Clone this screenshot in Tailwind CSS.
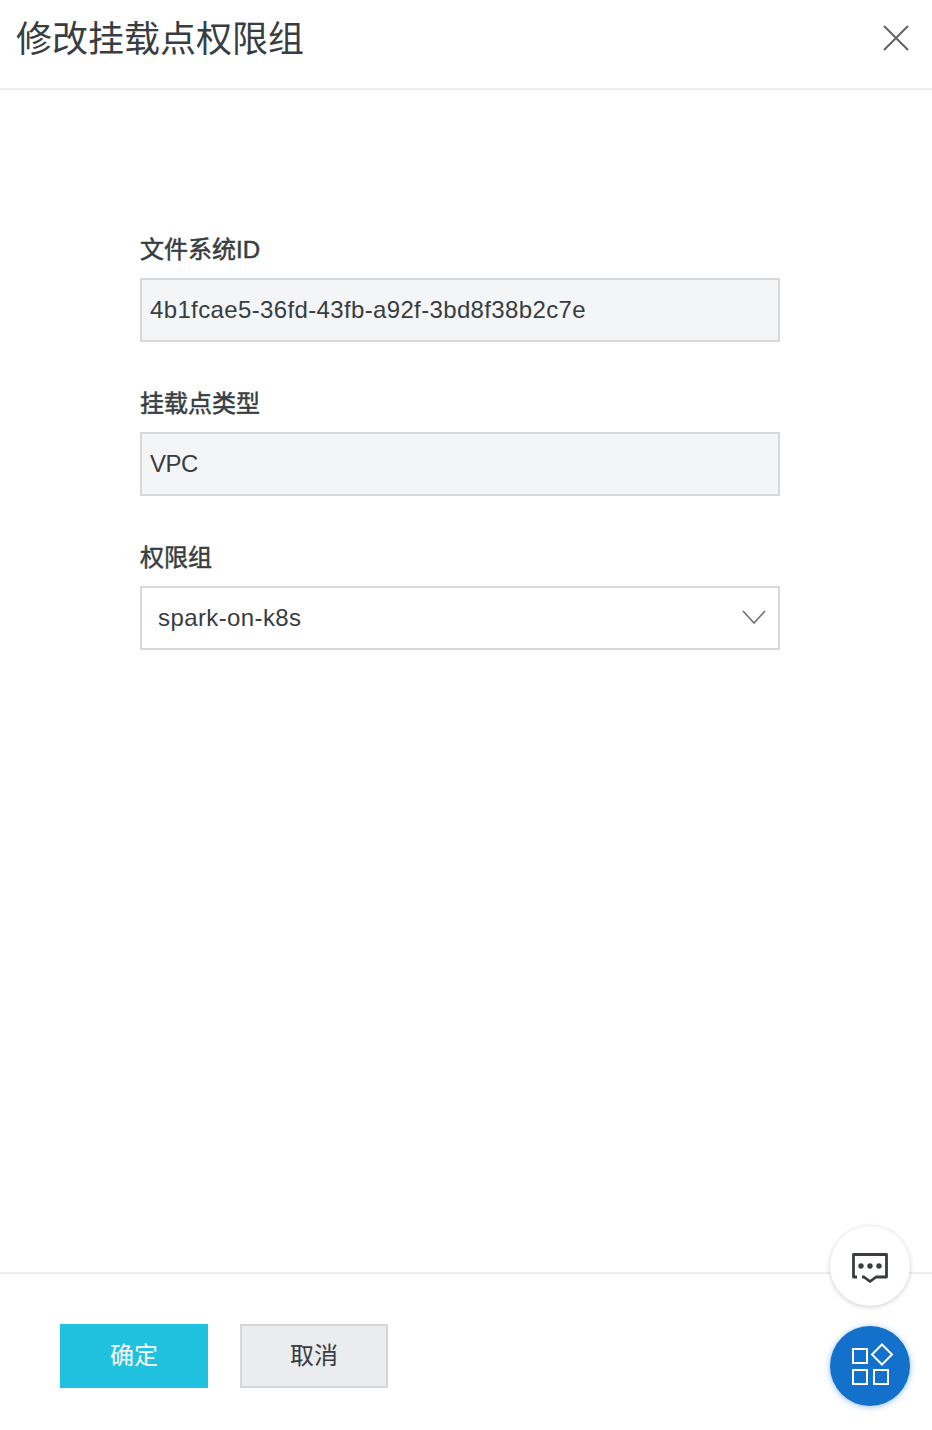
<!DOCTYPE html>
<html lang="zh-CN">
<head>
  <meta charset="UTF-8" />
  <meta name="viewport" content="width=device-width, initial-scale=1" />
  <title>修改挂载点权限组</title>
  <script src="https://cdn.jsdelivr.net/npm/@tailwindcss/browser@4"></script>
</head>
<body class="bg-white">
  <div class="relative flex flex-col w-[932px] h-[1430px] overflow-hidden text-[#373d41] font-['Liberation_Sans','Noto_Sans_CJK_SC',sans-serif]">
    <header class="flex items-center justify-between h-[90px] shrink-0 pl-4 pr-[22px] pb-3 border-b-2 border-[#eeeeee]">
      <h1 class="mt-1 text-[36px] leading-[44px] font-normal">修改挂载点权限组</h1>
      <svg class="w-7 h-7 text-[#5f6367]" viewBox="0 0 28 28" fill="none" stroke="currentColor" stroke-width="2">
        <path d="M2 2L26 26M26 2L2 26" />
      </svg>
    </header>

    <main class="flex-1 pl-[140px] pr-[152px] pt-[144px] flex flex-col gap-[46px]">
      <div>
        <label class="block h-[44px] text-2xl leading-8 [-webkit-text-stroke:0.5px_#373d41]">文件系统ID</label>
        <div class="flex items-center h-16 px-2 border-2 border-[#d7d8d9] bg-[#f4f5f7] text-2xl tracking-[0.36px]">4b1fcae5-36fd-43fb-a92f-3bd8f38b2c7e</div>
      </div>
      <div>
        <label class="block h-[44px] text-2xl leading-8 [-webkit-text-stroke:0.5px_#373d41]">挂载点类型</label>
        <div class="flex items-center h-16 px-2 border-2 border-[#d7d8d9] bg-[#f4f5f7] text-2xl tracking-[-0.5px]">VPC</div>
      </div>
      <div>
        <label class="block h-[44px] text-2xl leading-8 [-webkit-text-stroke:0.5px_#373d41]">权限组</label>
        <div class="flex items-center justify-between h-16 pl-4 pr-3 border-2 border-[#d7d8d9] bg-white text-2xl tracking-[0.4px]">
          <span>spark-on-k8s</span>
          <svg class="w-6 h-3.5 -mt-0.5 text-[#6b6f73]" viewBox="0 0 24 14" fill="none" stroke="currentColor" stroke-width="1.6">
            <path d="M1 1L12 13L23 1" />
          </svg>
        </div>
      </div>
    </main>

    <footer class="h-[158px] shrink-0 border-t-2 border-[#eeeeee] pt-[50px] pl-[60px] flex gap-8">
      <button class="w-[148px] h-16 bg-[#1fc1df] text-white text-2xl">确定</button>
      <button class="w-[148px] h-16 bg-[#eaeced] border-2 border-[#d4d6d7] text-2xl">取消</button>
    </footer>

    <!-- floating widgets -->
    <div class="absolute right-[22px] bottom-6 flex flex-col gap-5">
      <div class="w-20 h-20 rounded-full bg-white shadow-[0_1px_5px_rgba(0,0,0,0.2)]">
        <svg class="w-20 h-20 text-[#373d41]" viewBox="0 0 80 80" fill="none" stroke="currentColor" stroke-width="2.8">
          <path d="M27 51H23.5V28.5H56.5V51H46L40 55.5L34 51H32" stroke-linejoin="round" />
          <circle cx="31" cy="40" r="2.7" fill="currentColor" stroke="none" />
          <circle cx="40" cy="40" r="2.7" fill="currentColor" stroke="none" />
          <circle cx="49" cy="40" r="2.7" fill="currentColor" stroke="none" />
        </svg>
      </div>
      <div class="w-20 h-20 rounded-full bg-[#1371cc] shadow-[0_1px_6px_rgba(19,113,204,0.45)]">
        <svg class="w-20 h-20" viewBox="0 0 80 80" fill="none" stroke="white" stroke-width="2">
          <rect x="23" y="23" width="14" height="14" />
          <rect x="23" y="44" width="14" height="14" />
          <rect x="44" y="44" width="14" height="14" />
          <path d="M52 18.5L62 28.5L52 38.5L42 28.5Z" />
        </svg>
      </div>
    </div>
  </div>
</body>
</html>
